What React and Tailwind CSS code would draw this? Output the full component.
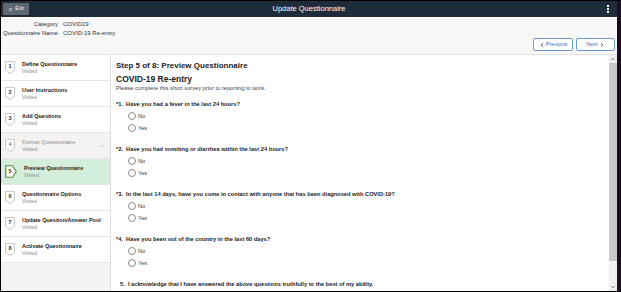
import React from "react";
import { X, ChevronDown, ChevronLeft, ChevronRight, ChevronUp } from "lucide-react";

const steps = [
  { n: 1, title: "Define Questionnaire" },
  { n: 2, title: "User Instructions" },
  { n: 3, title: "Add Questions" },
  { n: 4, title: "Format Questionnaire", muted: true },
  { n: 5, title: "Preview Questionnaire", active: true },
  { n: 6, title: "Questionnaire Options" },
  { n: 7, title: "Update Question/Answer Pool" },
  { n: 8, title: "Activate Questionnaire" },
];

const questions = [
  "*1.  Have you had a fever in the last 24 hours?",
  "*2.  Have you had vomiting or diarrhea within the last 24 hours?",
  "*3.  In the last 14 days, have you come in contact with anyone that has been diagnosed with COVID-19?",
  "*4.  Have you been out of the country in the last 60 days?",
];

const Badge = ({ n, active, muted }) =>
  active ? (
    <div className="relative w-[12px] h-[13px] shrink-0">
      <svg width="12" height="13" viewBox="0 0 12 13" className="absolute inset-0">
        <path d="M0.75 0.75 H7.5 L11.25 6.5 L7.5 12.25 H0.75 Z" fill="#fff" stroke="#5a8f2e" strokeWidth="1.2" />
      </svg>
      <span className="absolute inset-0 flex items-center justify-center pr-[2px] text-[5.5px] font-bold text-[#222]">
        {n}
      </span>
    </div>
  ) : (
    <div className="relative w-[10px] h-[13px] shrink-0">
      <svg width="10" height="13" viewBox="0 0 10 13" className="absolute inset-0">
        <path d="M0.5 0.5 H9.5 V9.5 L5 12.5 L0.5 9.5 Z" fill="#fff" stroke="#c8c8c8" strokeWidth="1" />
      </svg>
      <span
        className={`absolute inset-0 flex items-center justify-center pb-[2px] text-[5.5px] font-bold ${
          muted ? "text-[#888]" : "text-[#333]"
        }`}
      >
        {n}
      </span>
    </div>
  );

const Radio = ({ label }) => (
  <div className="flex items-center gap-[2px] h-[12px] pl-[12px]">
    <span className="w-[8px] h-[8px] rounded-full border border-[#8a8a8a] bg-white" />
    <span className="text-[5.5px] text-[#333]">{label}</span>
  </div>
);

export default function App() {
  return (
    <div
      className="w-[621px] h-[292px] overflow-hidden border-l border-t border-b border-black border-r-[4px] border-r-[#1e0b22] flex flex-col bg-white"
      style={{ fontFamily: '"Liberation Sans", Arial, sans-serif' }}
    >
      {/* header */}
      <div className="h-[16px] shrink-0 bg-[#1d2b3a] flex items-center px-[2px] relative">
        <div className="h-[12px] w-[26px] bg-[#5e6872] rounded-[1px] flex items-center justify-center gap-[2px] text-white">
          <X size={5} strokeWidth={3} />
          <span className="text-[5px]">Exit</span>
        </div>
        <div className="absolute left-0 right-0 text-center text-white text-[7.5px] pointer-events-none">
          Update Questionnaire
        </div>
        <div className="ml-auto mr-[6px] flex flex-col gap-[1px]">
          <span className="w-[2px] h-[2px] bg-white" />
          <span className="w-[2px] h-[2px] bg-white" />
          <span className="w-[2px] h-[2px] bg-white" />
        </div>
      </div>

      {/* info */}
      <div className="h-[38px] shrink-0 bg-[#f8f8f8] border-b border-[#e2e2e2] flex">
        <div className="pt-[3px] grid grid-cols-[57px_auto] gap-x-[5px] gap-y-[1px] text-[6px] text-[#333] leading-[8px] self-start whitespace-nowrap">
          <span className="text-right">Category</span>
          <span>COVID19</span>
          <span className="text-right">Questionnaire Name</span>
          <span>COVID-19 Re-entry</span>
        </div>
        <div className="ml-auto self-end mb-[3px] mr-[2px] flex gap-[3px]">
          <div className="w-[40px] h-[13px] bg-white border border-[#6f98d4] rounded-[2px] flex items-center justify-center gap-[1px] text-[#3a6fc0] text-[5.5px]">
            <ChevronLeft size={6} strokeWidth={4} className="text-[#2a4d80]" />
            <span>Previous</span>
          </div>
          <div className="w-[39px] h-[13px] bg-white border border-[#6f98d4] rounded-[2px] flex items-center justify-center gap-[1px] text-[#3a6fc0] text-[5.5px]">
            <span>Next</span>
            <ChevronRight size={6} strokeWidth={4} className="text-[#2a4d80]" />
          </div>
        </div>
      </div>

      {/* body */}
      <div className="flex-1 flex min-h-0">
        {/* sidebar */}
        <div className="w-[110px] shrink-0 bg-[#f4f4f4] border-r border-[#dcdcdc] flex flex-col">
          {steps.map((s) => (
            <div
              key={s.n}
              className={`h-[26px] shrink-0 flex items-center pl-[4px] pr-[4px] border-b border-[#e6e6e6] ${
                s.active ? "bg-[#d4eedc]" : s.muted ? "bg-[#f3f3f3]" : "bg-white"
              }`}
            >
              <Badge n={s.n} active={s.active} muted={s.muted} />
              <div className="ml-[7px] flex flex-col leading-[7px] whitespace-nowrap">
                <span className={`text-[5.5px] ${s.muted ? "text-[#8a8a8a]" : "font-bold text-[#222]"}`}>
                  {s.title}
                </span>
                <span className="text-[5px] text-[#8a8a8a]">Visited</span>
              </div>
              {s.muted && <ChevronDown size={6} className="ml-auto mr-[1px] text-[#999]" />}
            </div>
          ))}
        </div>

        {/* main */}
        <div className="flex-1 min-w-0 flex">
          <div className="flex-1 min-w-0 pl-[5px] pt-[5px] text-[#222] whitespace-pre">
            <div className="text-[8px] font-bold leading-[11px]">Step 5 of 8: Preview Questionnaire</div>
            <div className="mt-[3px] text-[8.5px] font-bold leading-[11px]">COVID-19 Re-entry</div>
            <div className="text-[5.7px] leading-[7px] text-[#444]">
              Please complete this short survey prior to reporting to work.
            </div>
            <div className="h-[8px]" />
            {questions.map((q) => (
              <div key={q} className="h-[45px]">
                <div className="text-[5.7px] font-bold leading-[8px]">{q}</div>
                <div className="mt-[2px] flex flex-col">
                  <Radio label="No" />
                  <Radio label="Yes" />
                </div>
              </div>
            ))}
            <div className="pl-[4px] text-[5.7px] font-bold leading-[8px]">
              5.  I acknowledge that I have answered the above questions truthfully to the best of my ability.
            </div>
          </div>
          {/* scrollbar */}
          <div className="w-[8px] shrink-0 bg-[#f0f0f0] flex flex-col items-center">
            <div className="h-[8px] flex items-center justify-center text-[#555]">
              <ChevronUp size={6} strokeWidth={3} />
            </div>
            <div className="w-[8px] h-[198px] bg-[#c8c8c8]" />
            <div className="flex-1" />
            <div className="h-[8px] flex items-center justify-center text-[#555]">
              <ChevronDown size={6} strokeWidth={3} />
            </div>
          </div>
        </div>
      </div>
    </div>
  );
}
